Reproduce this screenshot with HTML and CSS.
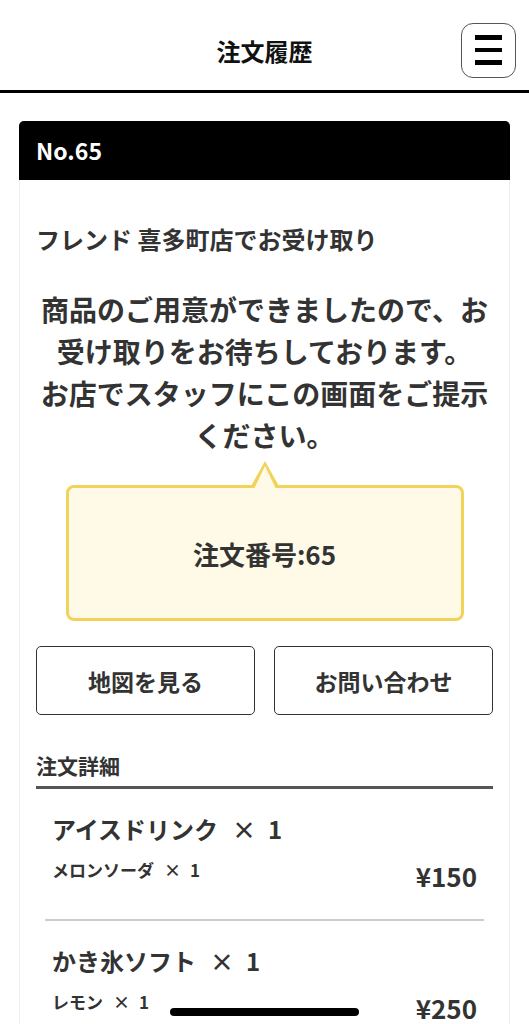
FILE: index.html
```html
<!DOCTYPE html>
<html lang="ja">
<head>
  <meta charset="UTF-8">
  <title>注文履歴</title>
  <link rel="stylesheet" href="styles.css">
</head>
<body>

<header class="topBar">
  <div></div>
  <h1 class="pageTitle">注文履歴</h1>
  <button class="menuButton" aria-label="メニュー">
    <span></span><span></span><span></span>
  </button>
</header>

<div class="orderCard">
  <div class="orderHead">No.65</div>

  <div class="orderBody">
    <p class="shopName">フレンド 喜多町店でお受け取り</p>

    <p class="readyMessage">商品のご用意ができましたので、お受け取りをお待ちしております。<br>お店でスタッフにこの画面をご提示ください。</p>

    <div class="numberBubble">注文番号:65</div>

    <div class="actionButtons">
      <button class="actionButton">地図を見る</button>
      <button class="actionButton">お問い合わせ</button>
    </div>

    <h2 class="detailTitle">注文詳細</h2>

    <ul class="itemList">
      <li class="item">
        <div class="itemName">アイスドリンク<span class="qty">×</span><span class="num">1</span></div>
        <div class="itemRow">
          <span class="itemOption">メロンソーダ<span class="qty">×</span><span class="num">1</span></span>
          <span class="itemPrice">¥150</span>
        </div>
      </li>
      <li class="item">
        <div class="itemName">かき氷ソフト<span class="qty">×</span><span class="num">1</span></div>
        <div class="itemRow">
          <span class="itemOption">レモン<span class="qty">×</span><span class="num">1</span></span>
          <span class="itemPrice">¥250</span>
        </div>
      </li>
    </ul>
  </div>
</div>

<div class="homeIndicator"></div>

</body>
</html>
```

FILE: styles.css
```css
html, body {
  margin: 0;
  padding: 0;
  background: #fff;
  font-family: 'Noto Sans CJK JP', 'Noto Sans', sans-serif;
  color: #333;
}

.topBar {
  display: grid;
  grid-template-columns: 1fr auto 1fr;
  align-items: center;
  height: 80px;
  padding-top: 10px;
  border-bottom: 3px solid #000;
}

.pageTitle {
  margin: 0;
  font-size: 24px;
  font-weight: bold;
  color: #111;
}

.menuButton {
  justify-self: end;
  margin-right: 13px;
  width: 55px;
  height: 55px;
  padding: 0;
  background: #fff;
  border: 1.5px solid #555;
  border-radius: 12px;
  display: flex;
  flex-direction: column;
  align-items: center;
  justify-content: center;
  gap: 8px;
}

.menuButton span {
  display: block;
  width: 27px;
  height: 4.5px;
  background: #000;
}

.orderCard {
  margin: 28px 19px 0;
  border: 1px solid #eee;
  border-bottom: none;
  border-radius: 5px 5px 0 0;
}

.orderHead {
  background: #000;
  color: #fff;
  height: 59px;
  line-height: 59px;
  margin: -1px -1px 0;
  padding-left: 17px;
  border-radius: 5px 5px 0 0;
  font-size: 23px;
  font-weight: bold;
}

.orderBody {
  padding: 0 16px;
}

.shopName {
  margin: 41px 0 0;
  font-size: 24px;
  font-weight: bold;
  line-height: 36px;
}

.readyMessage {
  margin: 31px 0 0;
  font-size: 28px;
  font-weight: bold;
  line-height: 42px;
  text-align: center;
}

.numberBubble {
  position: relative;
  width: 392px;
  height: 130px;
  margin: 29px auto 0;
  background: #fffae8;
  border: 3px solid #f2d35a;
  border-radius: 8px;
  display: flex;
  align-items: center;
  justify-content: center;
  font-size: 26px;
  font-weight: bold;
}

.numberBubble::before,
.numberBubble::after {
  content: "";
  position: absolute;
  left: 50%;
  width: 0;
  height: 0;
  border-style: solid;
  border-color: transparent;
}

.numberBubble::before {
  top: -27px;
  margin-left: -15px;
  border-width: 0 15px 27px;
  border-bottom-color: #f2d35a;
}

.numberBubble::after {
  top: -22px;
  margin-left: -11px;
  border-width: 0 11px 23px;
  border-bottom-color: #fffae8;
}

.actionButtons {
  display: grid;
  grid-template-columns: 1fr 1fr;
  gap: 19px;
  margin-top: 25px;
}

.actionButton {
  height: 69px;
  background: #fff;
  border: 1.5px solid #333;
  border-radius: 5px;
  font-family: inherit;
  font-size: 23px;
  font-weight: bold;
  color: #333;
}

.detailTitle {
  margin: 35px 0 0;
  padding-bottom: 6px;
  font-size: 21px;
  font-weight: bold;
  line-height: 30px;
  border-bottom: 3px solid #555;
}

.itemList {
  list-style: none;
  margin: 0 9px;
  padding: 0;
}

.item {
  padding: 22px 7px 30px;
  border-bottom: 2px solid #ccc;
}

.itemName {
  font-size: 24px;
  font-weight: bold;
  line-height: 36px;
}

.qty {
  margin-left: 14px;
}

.num {
  margin-left: 12px;
}

.itemRow {
  display: flex;
  justify-content: space-between;
  align-items: flex-start;
  margin-top: 10px;
}

.itemOption {
  font-size: 17px;
  font-weight: bold;
  line-height: 26px;
}

.itemOption .qty {
  margin-left: 10px;
}

.itemOption .num {
  margin-left: 9px;
}

.itemPrice {
  margin-top: 6px;
  font-size: 26px;
  font-weight: bold;
  line-height: 26px;
}

.homeIndicator {
  position: fixed;
  left: 170px;
  bottom: 8px;
  width: 189px;
  height: 8px;
  border-radius: 4px;
  background: #000;
}
```
